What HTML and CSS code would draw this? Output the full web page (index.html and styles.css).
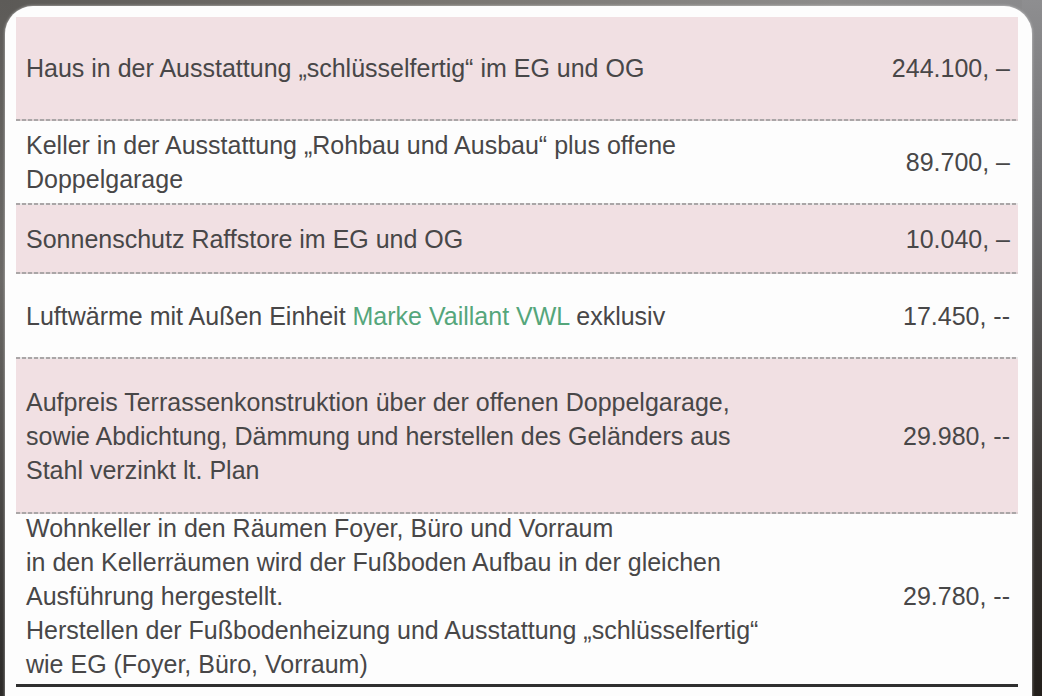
FILE: index.html
```html
<!DOCTYPE html>
<html lang="de">
<head>
<meta charset="utf-8">
<title>Leistungen</title>
<link rel="stylesheet" href="styles.css">
</head>
<body>
<div class="card">
  <div class="row pink r1">
    <div class="desc">Haus in der Ausstattung „schlüsselfertig“ im EG und OG</div>
    <div class="amount">244.100, –</div>
  </div>
  <div class="row r2">
    <div class="desc">Keller in der Ausstattung „Rohbau und Ausbau“ plus offene<br>Doppelgarage</div>
    <div class="amount">89.700, –</div>
  </div>
  <div class="row pink r3">
    <div class="desc">Sonnenschutz Raffstore im EG und OG</div>
    <div class="amount">10.040, –</div>
  </div>
  <div class="row r4">
    <div class="desc">Luftwärme mit Außen Einheit <span class="green">Marke Vaillant VWL</span> exklusiv</div>
    <div class="amount">17.450, --</div>
  </div>
  <div class="row pink r5">
    <div class="desc">Aufpreis Terrassenkonstruktion über der offenen Doppelgarage,<br>sowie Abdichtung, Dämmung und herstellen des Geländers aus<br>Stahl verzinkt lt. Plan</div>
    <div class="amount">29.980, --</div>
  </div>
  <div class="row last r6">
    <div class="desc">Wohnkeller in den Räumen Foyer, Büro und Vorraum<br>in den Kellerräumen wird der Fußboden Aufbau in der gleichen<br>Ausführung hergestellt.<br>Herstellen der Fußbodenheizung und Ausstattung „schlüsselfertig“<br>wie EG (Foyer, Büro, Vorraum)</div>
    <div class="amount">29.780, --</div>
  </div>
</div>
</body>
</html>
```

FILE: styles.css
```css
html, body {
  margin: 0;
  padding: 0;
}
body {
  width: 1042px;
  height: 696px;
  overflow: hidden;
  background: linear-gradient(90deg, #5b5956 0%, #77746f 40%, #8d8c8b 80%, #8a8a8c 100%);
  font-family: "Liberation Sans", Arial, sans-serif;
  position: relative;
}
body::before {
  content: "";
  position: absolute;
  right: 0;
  top: 0;
  width: 20px;
  height: 696px;
  background: linear-gradient(180deg, #8e8e90 0%, #6c6c6e 30%, #3a3633 70%, #231f1b 100%);
}
body::after {
  content: "";
  position: absolute;
  left: 0;
  top: 0;
  width: 10px;
  height: 696px;
  background: linear-gradient(180deg, #5d5b58 0%, #6b6966 40%, #2c2a28 100%);
}
.card {
  position: relative;
  z-index: 1;
  margin: 6px 0 0 5px;
  width: 1027px;
  height: 720px;
  box-sizing: border-box;
  background: #fdfdfd;
  border-radius: 28px;
  padding: 11px 14px 0 11px;
  box-shadow: 0 0 3px rgba(255,255,255,0.6);
}
.row {
  display: flex;
  align-items: center;
  justify-content: space-between;
  box-sizing: border-box;
  padding: 0 8px 2px 10px;
  color: #484748;
  font-size: 25px;
  line-height: 34px;
  background: repeating-linear-gradient(90deg, #aaa6a7 0 4px, rgba(170,166,167,0.25) 4px 6px) left bottom / 100% 2px no-repeat, transparent;
}
.pink {
  background: repeating-linear-gradient(90deg, #aaa6a7 0 4px, rgba(170,166,167,0.25) 4px 6px) left bottom / 100% 2px no-repeat, #f1e0e3;
}
.r1 { height: 104px; }
.r2 { height: 84px; }
.r3 { height: 69px; }
.r4 { height: 85px; }
.r5 { height: 155px; }
.r6 { height: 173px; padding-bottom: 7px; }
.last {
  background: none;
  border-bottom: 3px solid #2f2f2f;
}
.desc {
  white-space: nowrap;
}
.amount {
  white-space: nowrap;
  text-align: right;
}
.green {
  color: #55a67b;
}
```
